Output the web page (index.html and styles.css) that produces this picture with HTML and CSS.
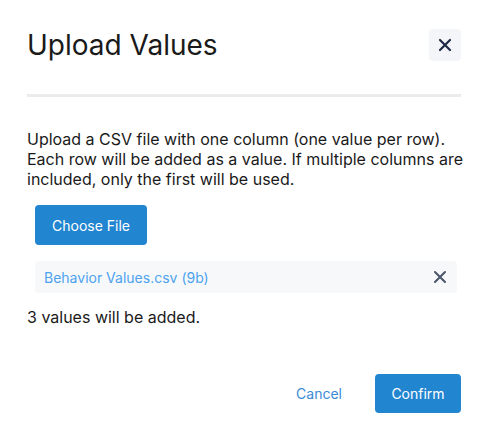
FILE: index.html
```html
<!DOCTYPE html>
<html>
<head>
<meta charset="utf-8">
<link rel="stylesheet" href="styles.css">
</head>
<body>
<div class="modal">
  <div class="header">
    <h1 class="title">Upload Values</h1>
    <button class="close" aria-label="Close">
      <svg width="14" height="14" viewBox="0 0 14 14"><path d="M2 2L12 12M12 2L2 12" stroke="#1e2a45" stroke-width="2.2" stroke-linecap="round"/></svg>
    </button>
  </div>
  <div class="divider"></div>
  <p class="desc">Upload a CSV file with one column (one value per row). Each row will be added as a value. If multiple columns are included, only the first will be used.</p>
  <div class="choose-wrap"><button class="btn primary choose">Choose File</button></div>
  <div class="file-row">
    <span class="file-name">Behavior Values.csv (9b)</span>
    <svg class="file-x" width="14" height="14" viewBox="0 0 14 14"><path d="M2 2L12 12M12 2L2 12" stroke="#4a5568" stroke-width="2" stroke-linecap="round"/></svg>
  </div>
  <p class="count">3 values will be added.</p>
  <div class="footer">
    <button class="btn link">Cancel</button>
    <button class="btn primary confirm">Confirm</button>
  </div>
</div>
</body>
</html>
```
FILE: styles.css
```css
* { box-sizing: border-box; }
html, body { margin: 0; padding: 0; background: #fff; }
body { font-family: Inter, "Noto Sans", sans-serif; color: #1a1a1a; }
.modal { width: 490px; height: 442px; padding: 29px 29px 0 27px; }
.header { display: flex; justify-content: space-between; align-items: center; height: 32px; }
.title { margin: 0; font-size: 28px; font-weight: 400; color: #1a1a1a; letter-spacing: 0; line-height: 32px; }
.close { width: 32px; height: 32px; border: none; border-radius: 4px; background: #f4f5f8; display: flex; align-items: center; justify-content: center; padding: 0; }
.divider { height: 3px; background: #ebebeb; margin-top: 33px; }
.desc { margin: 32px -10px 0 0; font-size: 16px; line-height: 20px; color: #1a1a1a; }
.choose-wrap { padding-left: 8px; margin-top: 16px; }
.btn { font-family: Inter, "Noto Sans", sans-serif; font-size: 14px; border: none; cursor: pointer; }
.primary { background: #2185d0; color: #fff; border-radius: 4px; height: 40px; }
.choose { width: 112px; }
.file-row { margin: 16px 4px 0 8px; height: 32px; background: #f7f8fa; border-radius: 4px; display: flex; align-items: center; justify-content: space-between; padding: 0 10px 0 9px; }
.file-name { font-size: 14px; color: #4da3ef; }
.count { margin: 14px 0 0; font-size: 16px; line-height: 20px; }
.footer { display: flex; justify-content: flex-end; align-items: center; gap: 33px; margin-top: 47px; }
.link { background: none; color: #3b8ad6; padding: 0; }
.confirm { width: 86px; height: 39px; }
```
